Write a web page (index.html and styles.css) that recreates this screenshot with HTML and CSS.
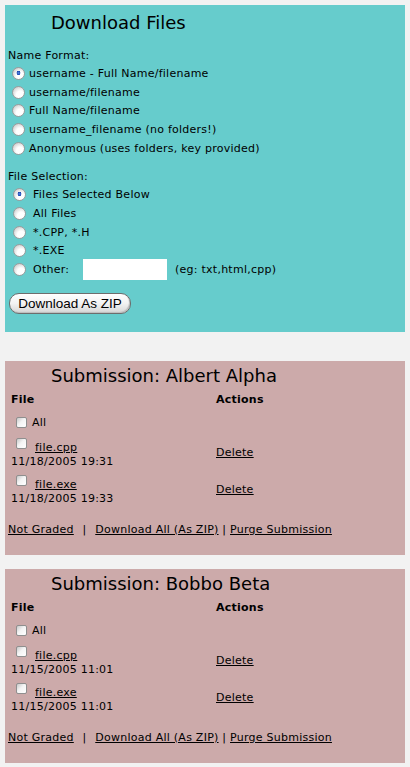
FILE: index.html
```html
<!DOCTYPE html>
<html>

<head>
    <link rel="stylesheet" href="styles.css">
</head>

<body>
    <div class="panel download">
        <h1>Download Files</h1>
        <div class="label">Name Format:</div>
        <label class="opt"><input type="radio" name="fmt" checked>username - Full Name/filename</label>
        <label class="opt"><input type="radio" name="fmt">username/filename</label>
        <label class="opt"><input type="radio" name="fmt">Full Name/filename</label>
        <label class="opt"><input type="radio" name="fmt">username_filename (no folders!)</label>
        <label class="opt"><input type="radio" name="fmt">Anonymous (uses folders, key provided)</label>

        <div class="label section">File Selection:</div>
        <label class="opt wide"><input type="radio" name="sel" checked>Files Selected Below</label>
        <label class="opt wide"><input type="radio" name="sel">All Files</label>
        <label class="opt wide"><input type="radio" name="sel">*.CPP, *.H</label>
        <label class="opt wide"><input type="radio" name="sel">*.EXE</label>
        <label class="opt wide other">
            <input type="radio" name="sel"><span class="other-name">Other:</span>
            <input type="text" class="ext">
            <span class="hint">(eg: txt,html,cpp)</span>
        </label>

        <button class="zip">Download As ZIP</button>
    </div>

    <div class="panel submission first">
        <h1>Submission: Albert Alpha</h1>
        <div class="files">
            <div class="head">File</div>
            <div class="head">Actions</div>

            <label class="all"><input type="checkbox">All</label>
            <div></div>

            <div class="file">
                <label><input type="checkbox"><a href="#">file.cpp</a></label>
                <div class="date">11/18/2005 19:31</div>
            </div>
            <div class="action"><a href="#">Delete</a></div>

            <div class="file">
                <label><input type="checkbox"><a href="#">file.exe</a></label>
                <div class="date">11/18/2005 19:33</div>
            </div>
            <div class="action"><a href="#">Delete</a></div>
        </div>
        <div class="links">
            <a href="#">Not Graded</a> <span class="sep">|</span> <a href="#">Download All (As ZIP)</a> | <a href="#">Purge Submission</a>
        </div>
    </div>

    <div class="panel submission">
        <h1>Submission: Bobbo Beta</h1>
        <div class="files">
            <div class="head">File</div>
            <div class="head">Actions</div>

            <label class="all"><input type="checkbox">All</label>
            <div></div>

            <div class="file">
                <label><input type="checkbox"><a href="#">file.cpp</a></label>
                <div class="date">11/15/2005 11:01</div>
            </div>
            <div class="action"><a href="#">Delete</a></div>

            <div class="file">
                <label><input type="checkbox"><a href="#">file.exe</a></label>
                <div class="date">11/15/2005 11:01</div>
            </div>
            <div class="action"><a href="#">Delete</a></div>
        </div>
        <div class="links">
            <a href="#">Not Graded</a> <span class="sep">|</span> <a href="#">Download All (As ZIP)</a> | <a href="#">Purge Submission</a>
        </div>
    </div>
</body>

</html>
```

FILE: styles.css
```css
body {
    margin: 0;
    padding: 5px;
    background-color: #f2f2f2;
    font-family: 'DejaVu Sans', Verdana, sans-serif;
    font-size: 11px;
    letter-spacing: 0.25px;
    color: #000;
}

a {
    color: #000;
}

.panel {
    width: 400px;
    box-sizing: border-box;
}

.panel h1 {
    margin: 0;
    padding-left: 43px;
    font-size: 18px;
    font-weight: normal;
    line-height: 22px;
    letter-spacing: 0;
}

/* download box */

.download {
    background-color: #66cccc;
    padding: 7px 3px 18px 3px;
}

.download h1 {
    margin-bottom: 14px;
}

.label {
    line-height: 16px;
}

.label.section {
    margin-top: 12px;
}

.opt {
    display: flex;
    align-items: center;
    height: 18.7px;
}

.opt input[type=radio] {
    margin: 0 4px 0 4px;
}

.opt.wide input[type=radio] {
    margin: 0 7px 0 5px;
}

.other .other-name {
    width: 50px;
}

input[type=radio] {
    appearance: none;
    width: 13px;
    height: 13px;
    border-radius: 50%;
    border: 1px solid #9c9c9c;
    box-sizing: border-box;
    background: radial-gradient(circle at 65% 70%, #ffffff 35%, #e6e6e6 60%, #b8b8b8 100%);
    flex: 0 0 auto;
}

input[type=radio]:checked {
    background:
        radial-gradient(circle at 50% 45%, #5d8ee6 0, #1b46b0 22%, transparent 26%),
        radial-gradient(circle at 65% 70%, #ffffff 35%, #e6e6e6 60%, #b8b8b8 100%);
}

input[type=checkbox] {
    appearance: none;
    width: 11px;
    height: 11px;
    margin: 0;
    border: 1px solid #8f8f8f;
    border-radius: 2px;
    box-sizing: border-box;
    background: linear-gradient(135deg, #c8c8c8 0%, #f4f4f4 45%, #ffffff 100%);
}

.ext {
    width: 84px;
    height: 21px;
    box-sizing: border-box;
    border: none;
    background: #fff;
    margin: 0 8px 0 0;
    padding: 0;
}

.zip {
    display: block;
    margin: 14px 0 0 1px;
    width: 122px;
    height: 21px;
    padding: 0;
    border: 1px solid #6d6d6d;
    border-radius: 10px;
    background: linear-gradient(#ffffff 0%, #f2f2f2 50%, #d6d6d6 100%);
    box-shadow: inset -1px -1px 1px #bdbdbd;
    font-family: 'Liberation Sans', Arial, sans-serif;
    font-size: 13.5px;
    color: #000;
}

/* submission boxes */

.submission {
    background-color: #ccaaaa;
    padding: 4px 3px 19px 3px;
    margin-top: 14px;
}

.submission.first {
    margin-top: 29px;
}

.files {
    display: grid;
    grid-template-columns: 205px 1fr;
    align-items: center;
    padding-left: 3px;
    margin-top: 6px;
}

.head {
    font-weight: bold;
    line-height: 14px;
}

.all {
    display: flex;
    align-items: center;
    padding-left: 5px;
    margin-top: 9px;
    margin-bottom: 3px;
}

.all input {
    margin-right: 5px;
}

.file {
    margin-top: 6px;
}

.file label {
    display: flex;
    align-items: flex-start;
    padding-left: 5px;
}

.file label input {
    margin: 0 8px 0 0;
}

.file label a {
    margin-top: 3px;
}

.date {
    line-height: 15px;
}

.action {
    margin-top: 4px;
}

.links {
    margin-top: 17px;
    white-space: nowrap;
}

.links .sep {
    margin: 0 5px;
}
```
